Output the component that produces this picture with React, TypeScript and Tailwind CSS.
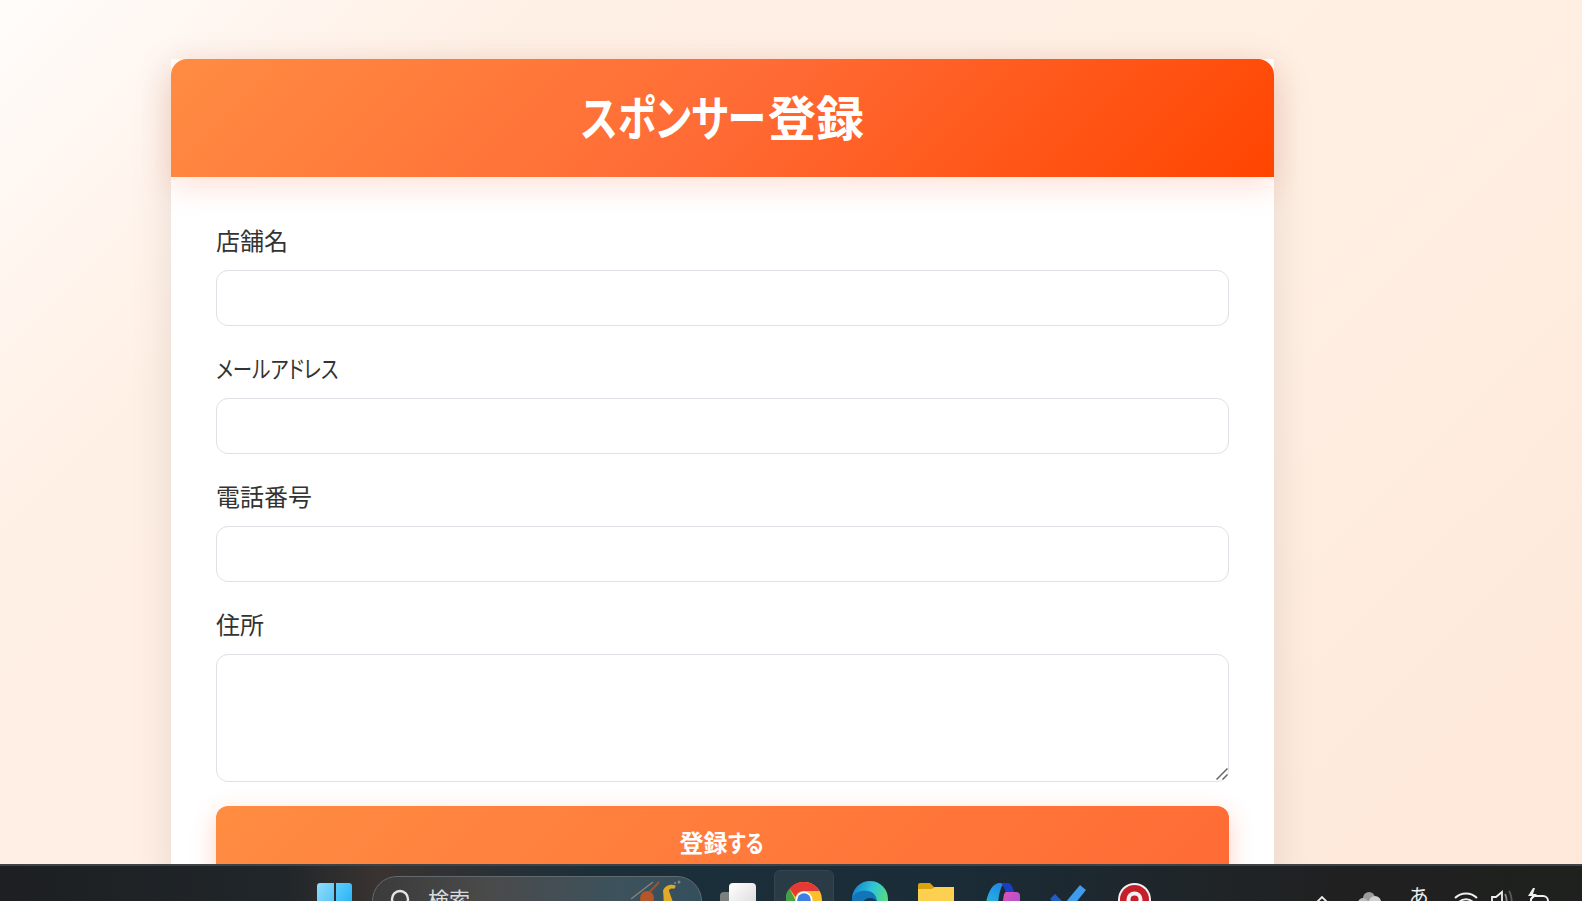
import React from 'react'

const jp = "font-['Noto_Sans_CJK_JP','Noto_Sans',sans-serif] [font-feature-settings:'palt']"
// kana in the reference font is narrower than its kanji
const narrow = 'inline-block origin-left scale-x-[0.81] whitespace-nowrap text-left align-top'

function Field({ label, area }: { label: React.ReactNode; area?: boolean }) {
  return (
    <div className="mb-6">
      <label className="block h-9 mb-3 text-2xl leading-9 text-[#333]">{label}</label>
      {area ? (
        <div className="relative">
          <textarea className="block w-full h-[128px] resize-none rounded-xl border border-[#e0e0e6] bg-white outline-none" />
          <svg width="12" height="12" viewBox="0 0 12 12" fill="none" className="absolute right-[1px] bottom-[2px] pointer-events-none">
            <path d="M0.5 11.5L11.5 0.5" stroke="#666" strokeWidth="1.5" />
            <path d="M6.5 11.5L11.5 6.5" stroke="#666" strokeWidth="1.5" />
          </svg>
        </div>
      ) : (
        <input className="block w-full h-14 rounded-xl border border-[#e0e0e6] bg-white outline-none" />
      )}
    </div>
  )
}

function Taskbar() {
  return (
    <div className="relative z-10 h-[37px] shrink-0 overflow-hidden flex items-start border-t-2 border-[#3d4347] bg-[linear-gradient(90deg,#1d1f22_0%,#20262a_18%,#3a3331_24%,#1b2f3a_38%,#1a2c38_60%,#1f2529_75%,#202020_85%,#1e211e_100%)] pl-[317px]">
      {/* start */}
      <div className="mt-[17px] grid grid-cols-2 gap-[2px] w-[35px] shrink-0">
        <div className="h-6 rounded-tl-[3px] bg-gradient-to-br from-[#8fdcfb] to-[#4cc2f5]" />
        <div className="h-6 rounded-tr-[3px] bg-gradient-to-br from-[#5ccdfb] to-[#1fb0f6]" />
      </div>
      {/* search */}
      <div className="ml-5 mt-[10px] h-[50px] w-[330px] shrink-0 flex items-start rounded-[25px] border border-[#626a6e] bg-[linear-gradient(90deg,#3c3b3b,#4a4a4a_35%,#3c525c_75%,#34505c)] pl-[17px]">
        <svg width="22" height="22" viewBox="0 0 22 22" fill="none" className="mt-[12px] shrink-0">
          <circle cx="10" cy="10" r="8" stroke="#e4e6e6" strokeWidth="2.4" />
          <path d="M16 16l5 5" stroke="#e4e6e6" strokeWidth="2.4" />
        </svg>
        <span className={`ml-4 mt-[7px] w-[42px] shrink-0 whitespace-nowrap text-[21px] leading-7 text-[#d8dcdd] ${jp}`}>検索</span>
        <svg width="60" height="30" viewBox="0 0 60 30" className="ml-auto mr-[14px] mt-[2px] shrink-0">
          <path d="M4 20L26 3" stroke="#8a8078" strokeWidth="1.5" />
          <path d="M20 16L32 3" stroke="#a5502a" strokeWidth="2" />
          <ellipse cx="20" cy="19" rx="7" ry="7" fill="#b5562a" />
          <path d="M36 12c1-5 8-8 13-5l-2 3c-3-1-5 0-5 2l5 14-9 4c-2-5-1-12-2-18z" fill="#e0a92a" />
          <circle cx="52" cy="3" r="1.5" fill="#8d7f90" />
          <circle cx="48" cy="4" r="1" fill="#8d7f90" />
        </svg>
      </div>
      {/* task view */}
      <div className="ml-[18px] mt-[17px] relative h-7 w-[36px] shrink-0">
        <div className="absolute left-0 top-[9px] h-6 w-[27px] rounded-sm bg-[#7c7f80]" />
        <div className="absolute right-0 top-0 h-7 w-[27px] rounded-sm bg-gradient-to-br from-white to-[#d8d8d8]" />
      </div>
      {/* chrome */}
      <div className="ml-[18px] mt-[4px] h-12 w-[60px] shrink-0 flex justify-center rounded-md border border-[#35454f] bg-[#2b3b45] pt-[11px]">
        <svg width="36" height="36" viewBox="0 0 36 36">
          <circle cx="18" cy="18" r="18" fill="#fbc02d" />
          <path d="M18 0a18 18 0 0 1 15.6 9H18a9 9 0 0 0-8.6 6L3.5 6.5A18 18 0 0 1 18 0z" fill="#e53935" />
          <path d="M3.5 6.5l7 14L16 36A18 18 0 0 1 3.5 6.5z" fill="#43a047" />
          <circle cx="18" cy="18" r="8.5" fill="#fff" />
          <circle cx="18" cy="18" r="6.8" fill="#3f7fe0" />
        </svg>
      </div>
      {/* edge */}
      <div className="ml-[18px] mt-[15px] shrink-0">
        <svg width="36" height="36" viewBox="0 0 36 36">
          <defs>
            <linearGradient id="edgeG" x1="0" y1="0.3" x2="1" y2="0.7">
              <stop offset="0" stopColor="#1586d0" />
              <stop offset="0.45" stopColor="#2fc4d8" />
              <stop offset="1" stopColor="#62e06a" />
            </linearGradient>
          </defs>
          <circle cx="18" cy="18" r="18" fill="url(#edgeG)" />
          <path d="M0 18C3 10 10 9 16 10c6 1 9 6 9 11-4-4-10-5-14-1-3 3-3 8-1 12C4 29 0 24 0 18z" fill="#1274ba" />
          <ellipse cx="18" cy="22" rx="7" ry="5" fill="#123a5c" />
        </svg>
      </div>
      {/* folder */}
      <div className="ml-[30px] mt-[17px] shrink-0">
        <svg width="36" height="30" viewBox="0 0 36 30">
          <path d="M0 2a2 2 0 0 1 2-2h10l4 4h18a2 2 0 0 1 2 2v22H0z" fill="#d9a20f" />
          <path d="M0 6h14l3-2h19v26H0z" fill="#fdd14f" />
        </svg>
      </div>
      {/* copilot */}
      <div className="ml-[30px] mt-[17px] shrink-0">
        <svg width="36" height="30" viewBox="0 0 36 30">
          <defs>
            <linearGradient id="copG" x1="0" y1="1" x2="0.6" y2="0">
              <stop offset="0" stopColor="#5cc45a" />
              <stop offset="0.5" stopColor="#25a9e0" />
              <stop offset="1" stopColor="#1f8ae8" />
            </linearGradient>
            <linearGradient id="copP" x1="0" y1="0" x2="1" y2="1">
              <stop offset="0" stopColor="#e052b0" />
              <stop offset="1" stopColor="#a050e0" />
            </linearGradient>
          </defs>
          <path d="M0 30C2 16 6 0 16 0h6c-5 1-7 8-9 30z" fill="url(#copG)" />
          <path d="M17 0h7c3 0 5 5 6 9H22c-2-4-3-7-5-9z" fill="#1a3fc0" />
          <path d="M22 9h10a4 4 0 0 1 4 4v17H18c1-9 1-21 4-21z" fill="url(#copP)" />
        </svg>
      </div>
      {/* todo */}
      <div className="ml-[30px] mt-[19px] shrink-0">
        <svg width="36" height="28" viewBox="0 0 36 28">
          <path d="M0 14l5-5 10 10-5 5z" fill="#1f5fc4" />
          <path d="M10 24L30 0l6 5-20 25z" fill="#3f9bec" />
        </svg>
      </div>
      {/* pin */}
      <div className="ml-[32px] mt-[17px] shrink-0">
        <svg width="33" height="33" viewBox="0 0 33 33">
          <circle cx="16.5" cy="16.5" r="16.5" fill="#f2f2f2" />
          <circle cx="16.5" cy="16.5" r="14.5" fill="#c4202b" />
          <circle cx="16.5" cy="16.5" r="8" fill="#f2f2f2" />
          <circle cx="16.5" cy="16.5" r="4" fill="#c4202b" />
          <path d="M13 18h4v15h-4z" fill="#f2f2f2" />
        </svg>
      </div>
      {/* tray */}
      <div className="ml-[165px] mt-[29px] shrink-0">
        <svg width="12" height="10" viewBox="0 0 12 10" fill="none">
          <path d="M1 7l5-5 5 5" stroke="#eee" strokeWidth="1.8" />
        </svg>
      </div>
      <div className="ml-[30px] mt-[26px] shrink-0">
        <svg width="23" height="16" viewBox="0 0 23 16">
          <circle cx="11" cy="6" r="6" fill="#9d9d9d" />
          <circle cx="5" cy="11" r="5" fill="#b9b9b9" />
          <circle cx="17" cy="10" r="6" fill="#cfcfcf" />
        </svg>
      </div>
      <span className={`ml-[28px] mt-[16px] w-[20px] shrink-0 whitespace-nowrap text-[20px] leading-7 text-[#eee] ${jp}`}>あ</span>
      <div className="ml-[25px] mt-[24px] shrink-0">
        <svg width="24" height="18" viewBox="0 0 24 18" fill="none" stroke="#f0f0f0" strokeWidth="2">
          <path d="M1 8a15.5 15.5 0 0 1 22 0" />
          <path d="M5 12a10 10 0 0 1 14 0" />
          <path d="M9 16a4.5 4.5 0 0 1 6 0" />
        </svg>
      </div>
      <div className="ml-[13px] mt-[24px] shrink-0">
        <svg width="22" height="18" viewBox="0 0 22 18" fill="none" strokeWidth="1.8">
          <path d="M1 18V7h4l6-5v16" stroke="#f0f0f0" />
          <path d="M14 4c2 3 2 9 2 14" stroke="#8a8a8a" />
          <path d="M18 1c3 4 3 12 3 17" stroke="#5a5a5a" />
        </svg>
      </div>
      <div className="ml-[13px] mt-[22px] shrink-0">
        <svg width="23" height="18" viewBox="0 0 23 18">
          <path d="M7 0L2 8h4l-2 5 7-7H7l2-6z" fill="#f0f0f0" />
          <path d="M5 11l3-3h9a5 5 0 0 1 5 5v5H5z" fill="none" stroke="#f0f0f0" strokeWidth="2" />
        </svg>
      </div>
    </div>
  )
}

export default function App() {
  return (
    <div className={`h-screen flex flex-col overflow-hidden ${jp}`}>
      <main className="flex-1 min-h-0 overflow-hidden bg-[linear-gradient(135deg,#fffcfa_0%,#fff0e5_22%,#ffefe3_60%,#fee8d9_100%)] pt-[59px] pl-[171px]">
        <div className="w-[1103px] bg-white shadow-[0_10px_40px_rgba(0,0,0,0.1)]">
          <header className="relative h-[118px] flex items-center justify-center pb-[6px] rounded-t-2xl bg-[linear-gradient(135deg,#ff8c42_0%,#ff6b35_50%,#ff4500_100%)] shadow-[0_10px_30px_rgba(255,107,53,0.2)]">
            <h1 className="text-5xl leading-none font-bold text-white whitespace-nowrap">
              <span className={`${narrow} w-[187px]`}>スポンサー</span>登録
            </h1>
          </header>
          <form className="px-[45px] pt-[45px]">
            <Field label="店舗名" />
            <Field label={<span className={narrow}>メールアドレス</span>} />
            <Field label="電話番号" />
            <Field label="住所" area />
            <button
              type="button"
              className="block w-full h-[72px] rounded-xl bg-[linear-gradient(135deg,#ff8c42,#ff6b35)] text-2xl leading-9 font-bold text-white shadow-[0_8px_25px_rgba(255,107,53,0.3)] whitespace-nowrap"
            >
              登録<span className={`${narrow} w-[38px]`}>する</span>
            </button>
          </form>
        </div>
      </main>
      <Taskbar />
    </div>
  )
}
